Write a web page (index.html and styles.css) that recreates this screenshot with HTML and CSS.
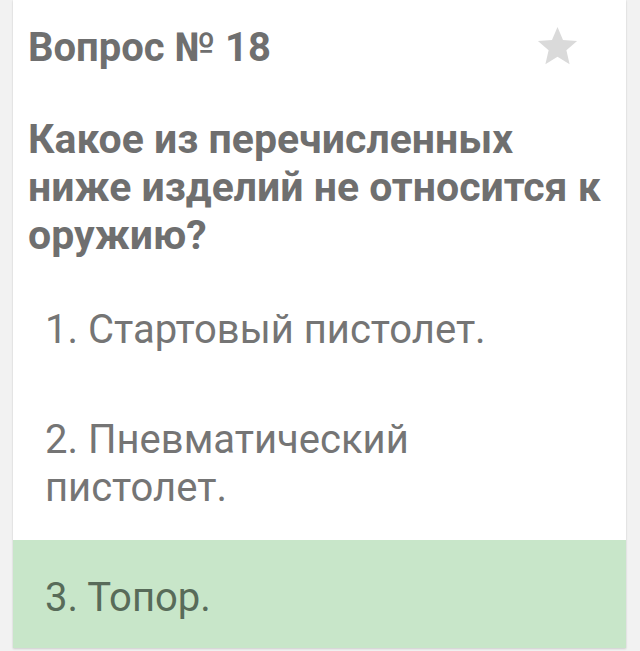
FILE: index.html
```html
<!DOCTYPE html>
<html lang="ru">
<head>
<meta charset="utf-8">
<link rel="stylesheet" href="styles.css">
</head>
<body>
<div class="card">
  <div class="head">
    <h1 class="title">Вопрос № 18</h1>
    <svg class="star" viewBox="0 0 24 24" width="47" height="47"><path d="M12 17.27L18.18 21l-1.64-7.03L22 9.24l-7.19-.61L12 2 9.19 8.63 2 9.24l5.46 4.73L5.82 21z" fill="#dadada"/></svg>
  </div>
  <p class="question">Какое из перечисленных ниже изделий не относится к оружию?</p>
  <ul class="answers">
    <li class="answer">1. Стартовый пистолет.</li>
    <li class="answer">2. Пневматический пистолет.</li>
    <li class="answer correct">3. Топор.</li>
  </ul>
</div>
</body>
</html>
```
FILE: styles.css
```css
html, body {
  margin: 0;
  padding: 0;
}
body {
  background: #f2f2f2;
  font-family: Roboto, "Noto Sans", sans-serif;
  color: #757575;
  height: 651px;
  overflow: hidden;
}
.card {
  margin: 0 14px 0 13px;
  background: #ffffff;
  box-shadow: 0 1px 2px rgba(0,0,0,0.14), 0 0 1px rgba(0,0,0,0.08);
}
.head {
  display: flex;
  align-items: center;
  justify-content: space-between;
  padding: 24px 45px 0 15px;
}
.title {
  margin: 0;
  font-size: 40px;
  line-height: 48px;
  font-weight: 700;
  color: #6f6f6f;
}
.star {
  display: block;
  margin-top: -4px;
}
.question {
  margin: 43px 0 0 0;
  padding: 0 15px 0 15px;
  font-size: 41px;
  line-height: 48px;
  font-weight: 700;
  color: #6f6f6f;
}
.answers {
  list-style: none;
  margin: 13px 0 0 0;
  padding: 0;
}
.answer {
  padding: 34px 40px 28px 32px;
  font-size: 40px;
  line-height: 48px;
  color: #757575;
}
.answer.correct {
  padding-bottom: 26px;
  background: #c8e6c9;
  color: #586b59;
}
```
